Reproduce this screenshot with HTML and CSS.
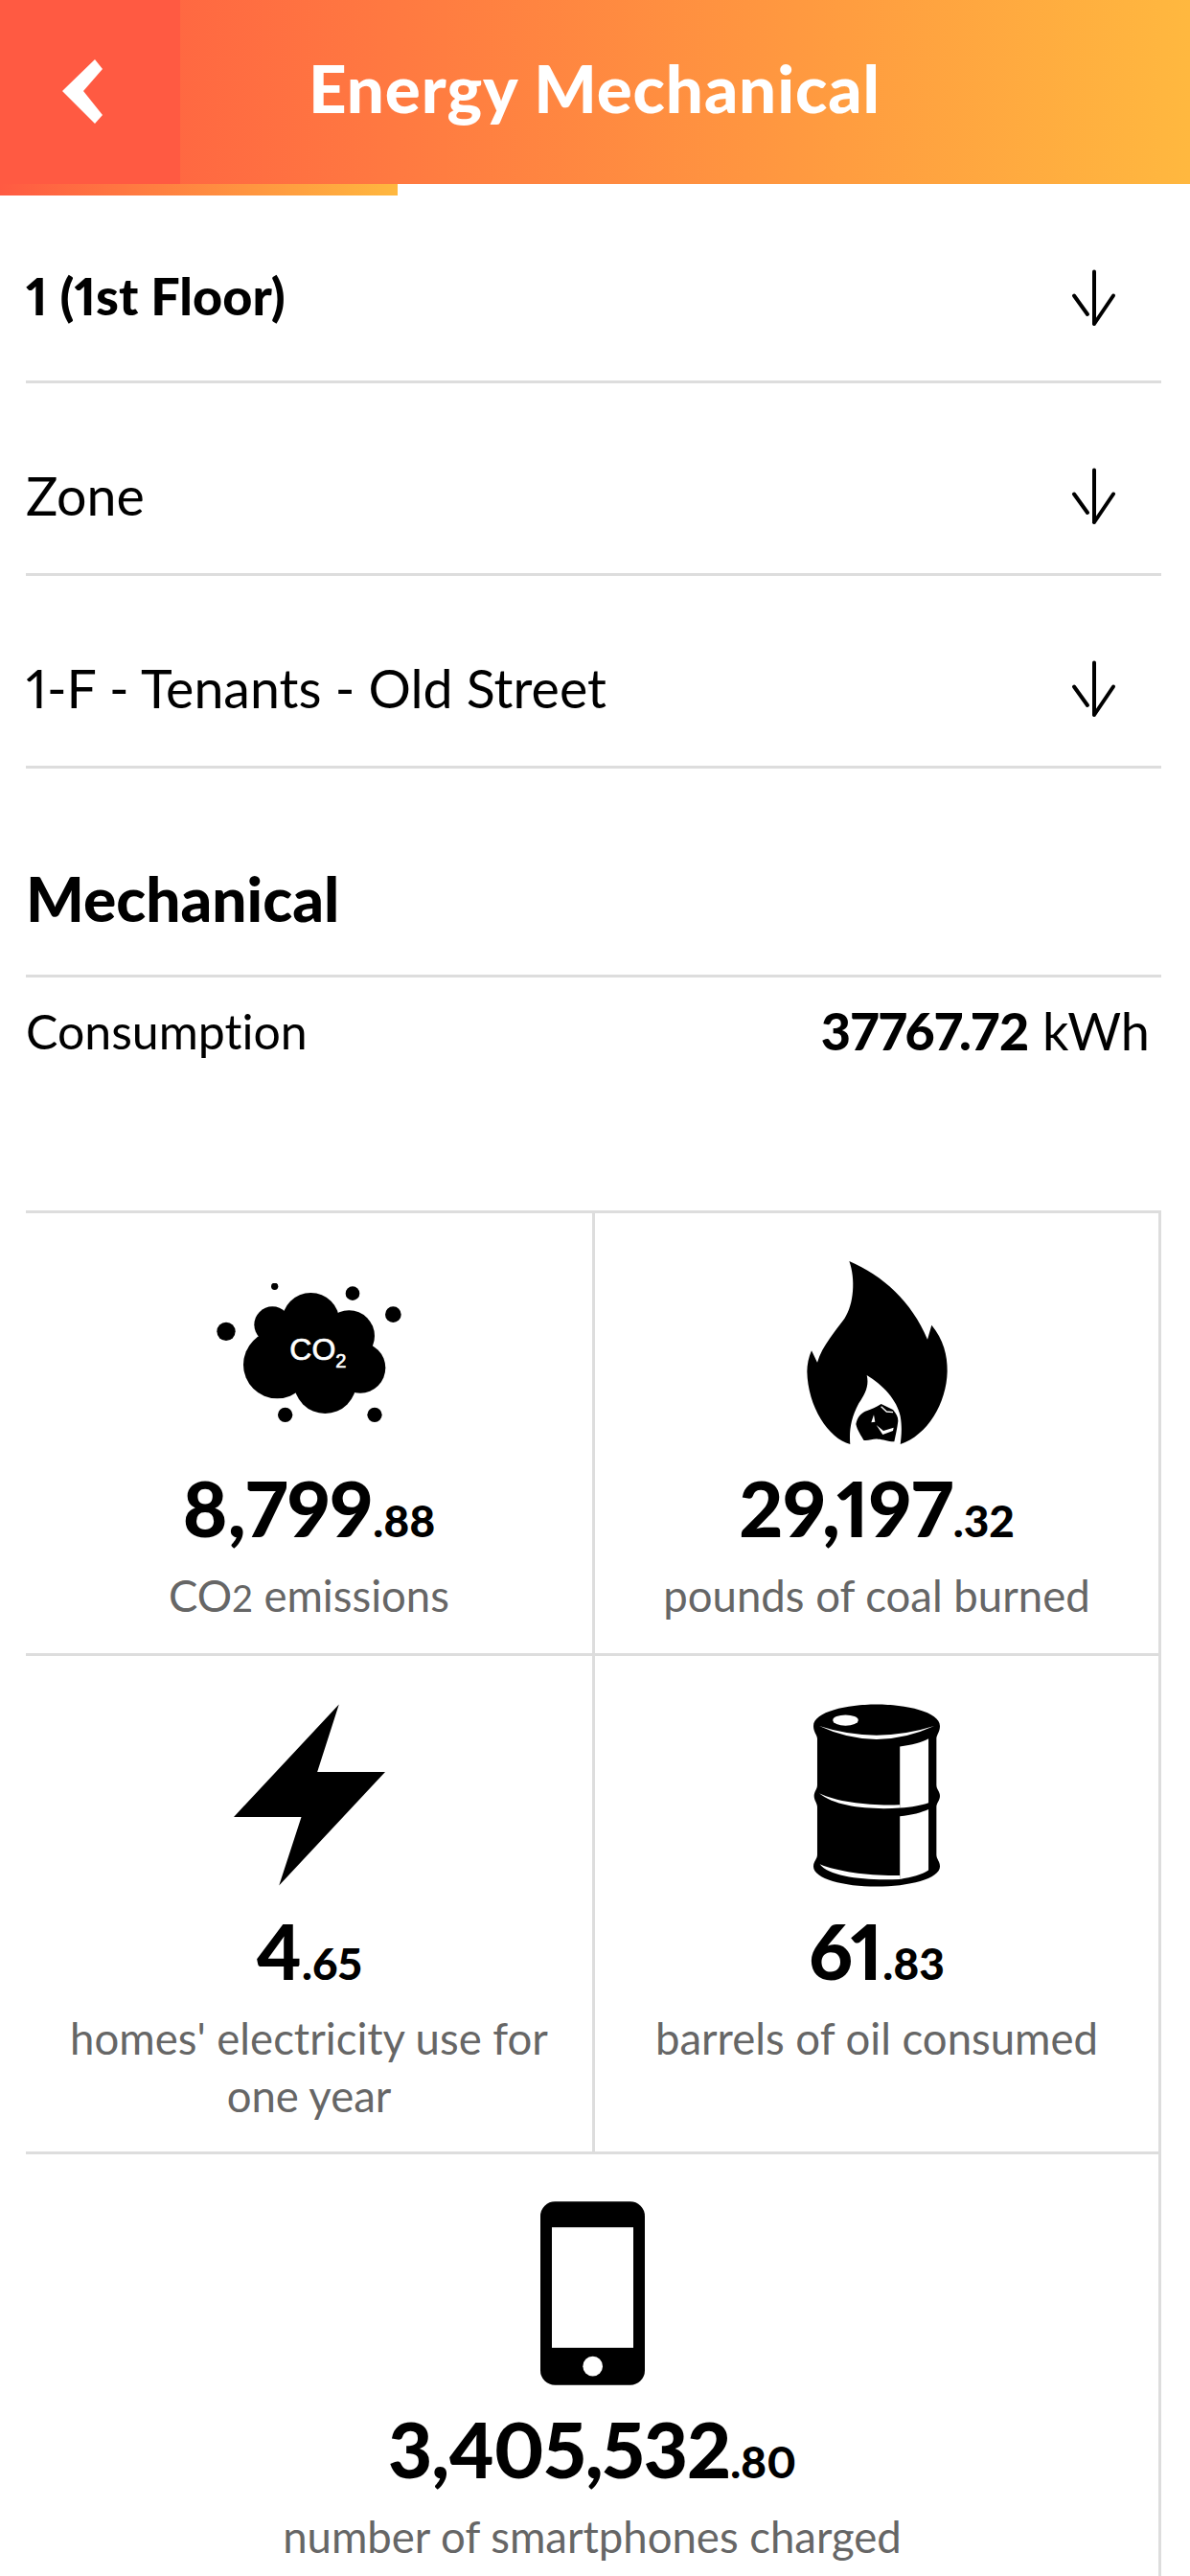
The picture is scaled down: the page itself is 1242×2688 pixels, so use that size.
FILE: index.html
```html
<!DOCTYPE html>
<html lang="en">
<head>
<meta charset="utf-8">
<title>Energy Mechanical</title>
<link rel="stylesheet" href="styles.css">
</head>
<body>
<header class="topbar">
  <div class="back">
    <svg class="chevron" viewBox="65 62 42 67"><polygon points="65,95 99,62 107,72 87,95 107,120 99,129"/></svg>
  </div>
  <h1 class="title">Energy Mechanical</h1>
</header>
<div class="progress"></div>
<main class="content">
  <div class="select"><span class="select-text strong">1 (1st Floor)</span>
    <svg class="arrow" viewBox="0 0 48 64"><path d="M24 6.5V61M44 31.5L24 61M3 31.5L17 51"/></svg></div>
  <div class="select"><span class="select-text">Zone</span>
    <svg class="arrow" viewBox="0 0 48 64"><path d="M24 6.5V61M44 31.5L24 61M3 31.5L17 51"/></svg></div>
  <div class="select"><span class="select-text">1-F - Tenants - Old Street</span>
    <svg class="arrow" viewBox="0 0 48 64"><path d="M24 6.5V61M44 31.5L24 61M3 31.5L17 51"/></svg></div>

  <h2 class="section">Mechanical</h2>
  <div class="consumption">
    <span>Consumption</span>
    <span class="reading"><b class="reading-value">37767.72</b> kWh</span>
  </div>

  <section class="grid">
    <div class="cell">
      <div class="icon">
        <svg class="i-co2" viewBox="76 145 577 435">
          <g>
            <circle cx="370" cy="265" r="90"/><circle cx="250" cy="275" r="57"/><circle cx="490" cy="310" r="80"/>
            <circle cx="265" cy="400" r="106"/><circle cx="525" cy="410" r="79"/><circle cx="415" cy="455" r="98"/>
            <circle cx="390" cy="360" r="95"/>
            <circle cx="105" cy="296" r="29"/><circle cx="257" cy="155" r="11"/><circle cx="501" cy="177" r="22"/>
            <circle cx="628" cy="243" r="25"/><circle cx="290" cy="557" r="23"/><circle cx="570" cy="557" r="23"/>
          </g>
          <text class="co2-text" x="304" y="386">CO<tspan class="co2-sub" dy="24">2</tspan></text>
        </svg>
      </div>
      <div class="num">8,799<small>.88</small></div>
      <div class="label">CO<span class="sub-two">2</span> emissions</div>
    </div>
    <div class="cell cell-right">
      <div class="icon">
        <svg class="i-flame" viewBox="122 75 441 573">
          <path d="M255 75C360 120 450 200 500 320L513 275C550 320 563 370 562 420C560 520 500 620 415 648L258 648C190 630 125 530 123 420C123 400 128 375 137 355L155 392C170 340 215 290 240 255C270 210 275 130 255 75Z"/>
          <path class="white" d="M310 432C360 462 405 510 415 560C422 600 417 630 415 650L258 650C255 610 258 570 285 520C305 490 318 465 310 432Z"/>
          <path d="M276 585C280 565 290 552 305 545C325 538 340 532 355 522L392 540C402 552 408 562 408 575C405 600 400 620 396 640C375 640 360 632 345 632C330 630 315 638 300 635C295 625 280 605 276 585Z"/>
          <path class="white" d="M332 556L336 578L324 580Z"/>
          <path class="white" d="M340 588L362 606L394 596L392 606L360 618Z"/>
          <path class="hl" d="M355 530L372 546L392 548"/>
        </svg>
      </div>
      <div class="num">29,197<small>.32</small></div>
      <div class="label">pounds of coal burned</div>
    </div>
    <div class="cell tall">
      <div class="icon">
        <svg class="i-bolt" viewBox="128 85 475 568"><polygon points="458,85 390,297 603,297 270,653 340,438 128,438"/></svg>
      </div>
      <div class="num">4<small>.65</small></div>
      <div class="label label-wrap">homes' electricity use for one year</div>
    </div>
    <div class="cell cell-right tall">
      <div class="icon">
        <svg class="i-barrel" viewBox="110 82 398 573">
          <path d="M308 82C400 82 508 105 508 150C508 170 497 178 497 190L497 335C497 350 508 355 508 370C508 385 497 392 497 405L497 555C497 570 508 575 508 592C508 630 410 655 308 655C206 655 110 630 110 592C110 575 122 570 122 555L122 405C122 392 112 385 112 370C112 355 122 350 122 335L122 190C122 178 110 170 110 150C110 105 216 82 308 82Z"/>
          <ellipse class="white" cx="211" cy="132" rx="40" ry="17"/>
          <path class="white" d="M128 150Q308 208 490 150Q308 234 128 150Z"/>
          <path class="white" d="M128 362C190 392 300 402 382 398L382 408C290 414 180 405 128 362Z"/>
          <path class="white" d="M130 585C190 610 290 622 382 620L382 632C280 638 160 625 130 585Z"/>
          <path class="white" d="M382 215C420 210 450 202 472 190L472 392C450 400 420 405 382 408Z"/>
          <path class="white" d="M382 434C420 430 450 422 472 412L472 604C450 618 420 627 382 632Z"/>
        </svg>
      </div>
      <div class="num">61<small>.83</small></div>
      <div class="label">barrels of oil consumed</div>
    </div>
    <div class="cell wide">
      <div class="icon">
        <svg class="i-phone" viewBox="130 82 327 575">
          <rect x="130" y="82" width="327" height="575" rx="46"/>
          <rect class="white" x="166" y="163" width="255" height="377"/>
          <circle class="white" cx="294" cy="598" r="31"/>
        </svg>
      </div>
      <div class="num num-tight">3,405,532<small>.80</small></div>
      <div class="label">number of smartphones charged</div>
    </div>
  </section>
</main>
</body>
</html>
```
FILE: styles.css
```css
* { box-sizing: border-box; }
html, body { margin: 0; padding: 0; background: #fff; }
body {
  width: 1242px;
  height: 2688px;
  overflow: hidden;
  font-family: "Lato", "Liberation Sans", sans-serif;
  font-variant-numeric: proportional-nums;
  font-variant-ligatures: none;
  color: #000;
}
.topbar {
  height: 192px;
  display: flex;
  background: linear-gradient(90deg, #ff5a42 0%, #ffb83f 100%);
}
.back {
  width: 188px;
  background: #ff5a42;
  padding: 62px 0 0 65px;
}
.chevron { display: block; width: 42px; height: 67px; fill: #fff; }
.title {
  margin: 0;
  padding-left: 134px;
  font-size: 69px;
  letter-spacing: 0.9px;
  line-height: 184px;
  font-weight: 900;
  color: #fff;
}
.progress {
  width: 415px;
  height: 12px;
  background: linear-gradient(90deg, #ff5a42 0%, #ffb83f 100%);
}
.content { padding: 0 30px 0 27px; }
.select {
  height: 201px;
  padding: 34px 46px 0 0;
  display: flex;
  align-items: center;
  justify-content: space-between;
  border-bottom: 3px solid #ddd;
}
.select:first-child { height: 196px; padding-top: 16px; }
.select-text { font-size: 55.5px; }
.select-text.strong { font-size: 54px; font-weight: 900; }
.arrow {
  width: 48px;
  height: 64px;
  fill: none;
  stroke: #000;
  stroke-width: 4;
  stroke-linecap: round;
}
.section {
  margin: 0;
  height: 218px;
  padding-top: 108px;
  font-size: 64px;
  line-height: 56px;
  font-weight: 900;
  border-bottom: 3px solid #ddd;
}
.consumption {
  display: flex;
  justify-content: space-between;
  height: 243px;
  padding: 24px 12px 0 0;
  font-size: 50px;
  line-height: 64px;
}
.reading { font-size: 54px; }
.reading-value { font-weight: 900; }
.grid {
  display: grid;
  grid-template-columns: 591px 591px;
  border-top: 3px solid #ddd;
  border-right: 3px solid #ddd;
}
.cell {
  height: 462px;
  padding-top: 48px;
  text-align: center;
  border-bottom: 3px solid #ddd;
}
.cell.tall { height: 520px; }
.cell-right { border-left: 3px solid #ddd; }
.wide { grid-column: 1 / 3; height: 440px; border-bottom: 0; }
.icon {
  height: 194px;
  display: flex;
  align-items: center;
  justify-content: center;
}
.icon svg { display: block; fill: #000; }
.i-co2 { width: 193px; height: 145px; }
.i-flame { width: 147px; height: 191px; }
.i-bolt { width: 158px; height: 190px; }
.i-barrel { width: 132px; height: 191px; }
.i-phone { width: 109px; height: 192px; }
.icon svg .white { fill: #fff; }
.icon svg .hl { fill: none; stroke: #fff; stroke-width: 4; }
.co2-text { font-family: "Liberation Sans", sans-serif; font-size: 96px; fill: #fff; stroke: #fff; stroke-width: 2px; }
.co2-sub { font-size: 60px; }
.num {
  margin-top: 23px;
  font-size: 80px;
  line-height: 84px;
  font-weight: 900;
}
.num-tight { letter-spacing: -1px; }
.num small { font-size: 46px; font-weight: 900; letter-spacing: 0; }
.label {
  margin: 6px auto 0;
  font-size: 45.5px;
  line-height: 60px;
  color: #666;
}
.label-wrap { max-width: 530px; }
.sub-two { font-size: 38px; }
```
